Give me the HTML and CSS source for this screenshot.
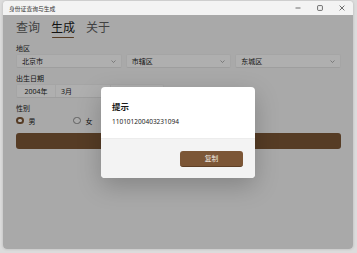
FILE: index.html
```html
<!DOCTYPE html>
<html lang="zh-CN">
<head>
  <meta charset="UTF-8">
  <title>身份证查询与生成</title>
  <link rel="stylesheet" href="styles.css">
</head>
<body>
  <div class="window">
    <div class="titlebar">
      <span class="title">身份证查询与生成</span>
      <div class="caption">
        <span class="cap-btn">
          <svg width="6" height="6" viewBox="0 0 6 6"><path d="M0.5 3h5" stroke="#333" stroke-width="0.7"/></svg>
        </span>
        <span class="cap-btn">
          <svg width="6" height="6" viewBox="0 0 6 6"><rect x="0.6" y="0.6" width="4.8" height="4.8" rx="0.8" fill="none" stroke="#333" stroke-width="0.7"/></svg>
        </span>
        <span class="cap-btn">
          <svg width="6" height="6" viewBox="0 0 6 6"><path d="M0.6 0.6l4.8 4.8M5.4 0.6l-4.8 4.8" stroke="#333" stroke-width="0.7"/></svg>
        </span>
      </div>
    </div>

    <div class="client">
      <div class="page">
        <nav class="tabs">
          <span class="tab">查询</span>
          <span class="tab active">生成</span>
          <span class="tab">关于</span>
        </nav>

        <div class="field-label">地区</div>
        <div class="combos">
          <div class="combo"><span>北京市</span><svg class="chevron" width="5" height="3" viewBox="0 0 5 3"><path d="M0.5 0.5l2 2 2-2" fill="none" stroke="#666" stroke-width="0.5"/></svg></div>
          <div class="combo"><span>市辖区</span><svg class="chevron" width="5" height="3" viewBox="0 0 5 3"><path d="M0.5 0.5l2 2 2-2" fill="none" stroke="#666" stroke-width="0.5"/></svg></div>
          <div class="combo"><span>东城区</span><svg class="chevron" width="5" height="3" viewBox="0 0 5 3"><path d="M0.5 0.5l2 2 2-2" fill="none" stroke="#666" stroke-width="0.5"/></svg></div>
        </div>

        <div class="field-label">出生日期</div>
        <div class="date-picker">
          <span class="date-col year">2004年</span>
          <span class="date-col">3月</span>
          <span class="date-col">23日</span>
        </div>

        <div class="field-label">性别</div>
        <div class="radios">
          <label class="radio"><span class="dot checked"></span>男</label>
          <label class="radio"><span class="dot"></span>女</label>
        </div>

        <button class="generate">生成</button>
      </div>

      <!-- content dialog with smoke layer -->
      <div class="smoke">
        <div class="dialog">
          <div class="dialog-body">
            <div class="dialog-title">提示</div>
            <div class="dialog-text">110101200403231094</div>
          </div>
          <div class="dialog-footer">
            <button class="primary">复制</button>
          </div>
        </div>
      </div>
    </div>
  </div>
</body>
</html>
```

FILE: styles.css
```css
body {
  margin: 0;
  width: 357px;
  height: 253px;
  overflow: hidden;
  background-color: #dcdcdc;
  font-family: "Noto Sans", "Noto Sans CJK SC", sans-serif;
  font-size: 7px;
  color: #1b1b1b;
}

.window {
  margin: 1px 0 0 3px;
  width: 350px;
  height: 248px;
  display: flex;
  flex-direction: column;
  border-radius: 4px;
  overflow: hidden;
  background-color: #f3f3f3;
  box-shadow: 0 0 3px rgba(0, 0, 0, 0.18);
}

.titlebar {
  height: 14px;
  display: flex;
  align-items: center;
  justify-content: space-between;
  padding-left: 6px;
  background-color: #f3f3f3;
}

.title {
  font-size: 5.8px;
  color: #333;
}

.caption {
  display: flex;
  height: 100%;
}

.cap-btn {
  width: 22px;
  display: flex;
  align-items: center;
  justify-content: center;
}

.client {
  flex: 1;
  position: relative;
  background-color: #f3f3f3;
}

.page {
  padding: 5px 12px 0 13px;
}

.tabs {
  display: flex;
  gap: 11px;
}

.tab {
  font-size: 12px;
  line-height: 16px;
  color: #5e5e5e;
  padding-bottom: 2px;
  position: relative;
}

.tab.active {
  color: #1b1b1b;
}

.tab.active::after {
  content: "";
  position: absolute;
  left: 1px;
  right: 1px;
  bottom: 0;
  height: 1.5px;
  border-radius: 1px;
  background-color: #7c5636;
}

.field-label {
  margin-top: 6px;
  line-height: 10px;
}

.combos {
  display: grid;
  grid-template-columns: 1fr 1fr 1fr;
  gap: 4px;
}

.combo {
  height: 14px;
  box-sizing: border-box;
  display: flex;
  align-items: center;
  justify-content: space-between;
  padding: 0 5px 0 5px;
  border: 0.5px solid #ededed;
  border-bottom-color: #e2e2e2;
  border-radius: 2px;
  background-color: #fbfbfb;
}

.date-picker {
  display: grid;
  grid-template-columns: 38px 55px 55px;
  width: 148px;
  height: 14px;
  box-sizing: border-box;
  border: 0.5px solid #ededed;
  border-bottom-color: #e2e2e2;
  border-radius: 2px;
  background-color: #fbfbfb;
}

.date-col {
  display: flex;
  align-items: center;
  padding-left: 5px;
  border-left: 0.5px solid #eeeeee;
}

.date-col.year {
  justify-content: center;
  padding-left: 0;
  border-left: none;
}

.radios {
  display: flex;
  height: 11px;
  align-items: center;
  margin-top: 1px;
}

.radio {
  min-width: 57px;
  display: flex;
  align-items: center;
  gap: 5px;
}

.dot {
  width: 7.5px;
  height: 7.5px;
  box-sizing: border-box;
  border-radius: 50%;
  border: 0.7px solid #8a8a8a;
  background-color: #f6f6f6;
}

.dot.checked {
  border: 2.2px solid #7c5636;
  background-color: #ffffff;
}

.generate {
  display: block;
  width: 100%;
  height: 16px;
  margin-top: 7px;
  border: none;
  border-radius: 3px;
  background-color: #7c5636;
  color: #ffffff;
  font-family: inherit;
  font-size: 7px;
}

.smoke {
  position: absolute;
  inset: 0;
  display: flex;
  align-items: center;
  justify-content: center;
  background-color: rgba(0, 0, 0, 0.3);
}

.dialog {
  width: 154px;
  height: 91px;
  display: flex;
  flex-direction: column;
  border-radius: 4px;
  overflow: hidden;
  background-color: #ffffff;
  box-shadow: 0 8px 24px rgba(0, 0, 0, 0.22);
}

.dialog-body {
  flex: 1;
  padding: 13px 11px 0 11px;
}

.dialog-title {
  font-size: 8.5px;
  font-weight: bold;
  line-height: 14px;
}

.dialog-text {
  margin-top: 3px;
  font-size: 6.5px;
  line-height: 10px;
}

.dialog-footer {
  height: 40px;
  box-sizing: border-box;
  padding: 12px 12px 0 12px;
  display: flex;
  justify-content: flex-end;
  background-color: #f3f3f3;
  border-top: 0.5px solid #ececec;
}

.primary {
  width: 63px;
  height: 16px;
  border: none;
  border-bottom: 0.8px solid #5e3f25;
  border-radius: 3px;
  background-color: #7c5636;
  color: #f2ebe4;
  font-family: inherit;
  font-size: 6.8px;
}
```
